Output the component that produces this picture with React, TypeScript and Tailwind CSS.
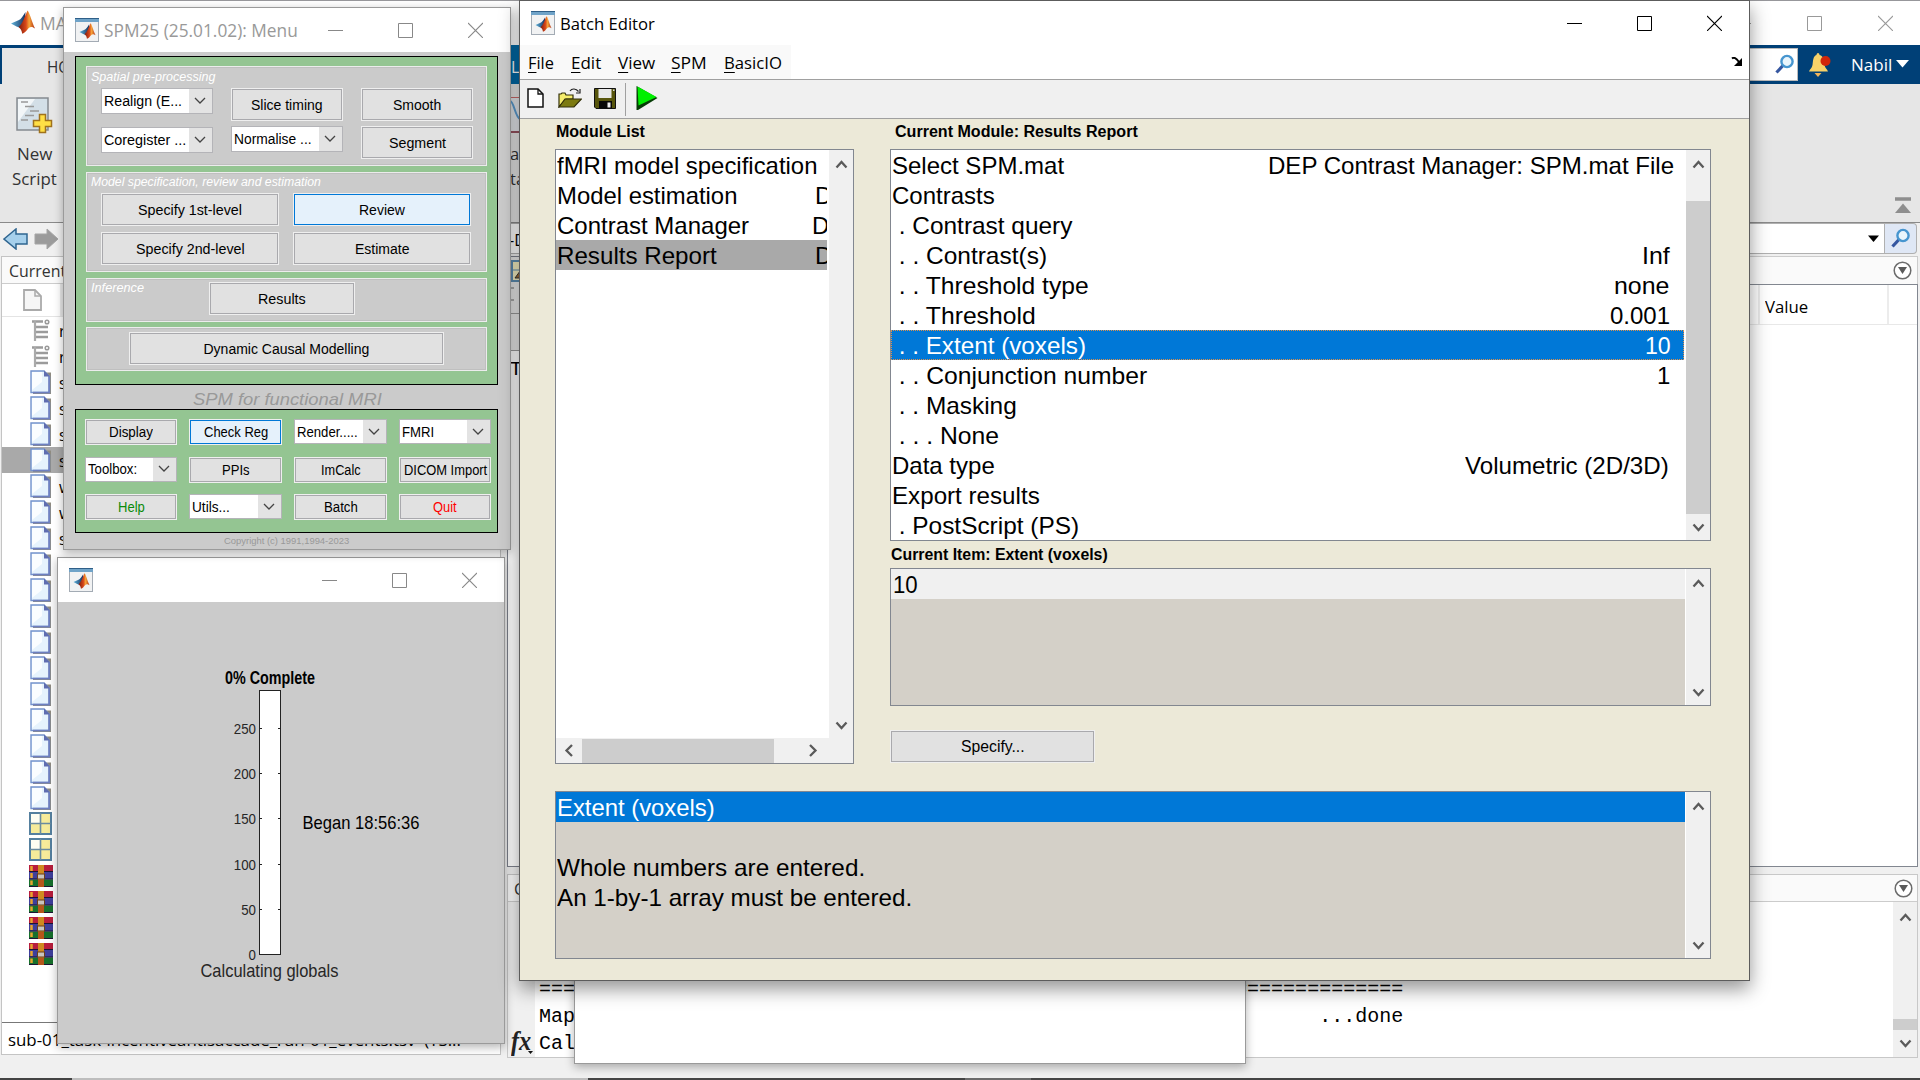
import { useLayoutEffect, useRef, useState } from "react";
import type { ReactNode } from "react";

const UI = "font-['Open_Sans','Noto_Sans',sans-serif]";
const ARIAL = "font-['Liberation_Sans',Arial,sans-serif]";
const MONO = "font-['Liberation_Mono','Courier_New',monospace]";

/** Text squeezed or stretched horizontally to a given width. */
function Fit({ w, className = "", children }: { w: number; className?: string; children: ReactNode }) {
  const ref = useRef<HTMLSpanElement>(null);
  const [scale, setScale] = useState(1);
  useLayoutEffect(() => {
    if (ref.current) setScale(w / ref.current.offsetWidth);
  }, [w]);
  return (
    <span className={`inline-block shrink-0 whitespace-pre text-left ${className}`} style={{ width: w }}>
      <span ref={ref} className="inline-block origin-left" style={{ transform: `scaleX(${scale})` }}>
        {children}
      </span>
    </span>
  );
}

function MatlabMark({ className = "" }: { className?: string }) {
  return (
    <svg viewBox="0 0 24 24" className={className}>
      <defs>
        <linearGradient id="mk-b" x1="0" y1="0" x2="1" y2="0">
          <stop offset="0" stopColor="#5fb4dc" />
          <stop offset="1" stopColor="#17305e" />
        </linearGradient>
        <linearGradient id="mk-o" x1="0" y1="0" x2="1" y2="0">
          <stop offset="0" stopColor="#7c1a0c" />
          <stop offset=".45" stopColor="#d8481a" />
          <stop offset=".65" stopColor="#f6a53a" />
          <stop offset="1" stopColor="#b02a10" />
        </linearGradient>
      </defs>
      <path d="M0 13.5 L7.5 10.2 C10 9.5 12 6 14.5 2 L14 11 L8.5 17.5 L5.5 16.5 Z" fill="url(#mk-b)" />
      <path d="M16.5 0.5 C18.5 2 20.5 11 24 18.5 C21.5 16.5 19.5 16.3 17.3 18.4 C15.5 20.5 13.5 23.3 11.2 23.7 C10.8 21 10 18.7 7.5 17 C11.5 14 14 6 16.5 0.5 Z" fill="url(#mk-o)" />
    </svg>
  );
}

function WinIcon() {
  return (
    <div className="-mt-px flex h-[24px] w-[24px] shrink-0 flex-col border border-[#a3abb4] bg-[#f1f2f3]">
      <div className="-mx-px -mt-px h-[4px] border-t border-[#2f5f88] bg-[#6fa3c8]" />
      <div className="flex flex-1 items-center justify-center">
        <MatlabMark className="h-[16px] w-[17px]" />
      </div>
    </div>
  );
}

function CaptionButtons({ color, gap }: { color: string; gap: string }) {
  return (
    <div className={`-mt-px flex items-center ${gap} ${color}`}>
      <svg width="15" height="16" viewBox="0 0 15 16"><path d="M0 8.5H15" stroke="currentColor" /></svg>
      <svg width="15" height="16" viewBox="0 0 15 16"><path d="M.5 1.5H14.5V15.5H.5Z" fill="none" stroke="currentColor" /></svg>
      <svg width="15" height="16" viewBox="0 0 15 16"><path d="M0 1L15 16M15 1L0 16" stroke="currentColor" strokeWidth="1.1" /></svg>
    </div>
  );
}

function Arrow({ dir }: { dir: "up" | "down" | "left" | "right" }) {
  const paths = {
    up: "M1.5 8.5L6.5 3L11.5 8.5",
    down: "M1.5 3.5L6.5 9L11.5 3.5",
    left: "M9 1L3.5 6.5L9 12",
    right: "M4 1L9.5 6.5L4 12",
  };
  return (
    <svg width="13" height="13" viewBox="0 0 13 13" className="block shrink-0">
      <path d={paths[dir]} fill="none" stroke="#5a5a5a" strokeWidth="2.3" />
    </svg>
  );
}

function VScroll({ thumb }: { thumb?: ReactNode }) {
  return (
    <div className="flex w-[25px] shrink-0 flex-col items-center justify-between border-l border-white bg-[#f0f0f0] pt-[9px] pb-[6px]">
      <Arrow dir="up" />
      {thumb}
      <Arrow dir="down" />
    </div>
  );
}

/* ---------- SPM menu ---------- */

function Btn({ size, w, active, color = "text-black", font = "text-[14px]", children }: { size: string; w?: number; active?: boolean; color?: string; font?: string; children: string }) {
  return (
    <div className={`shrink-0 border border-[#efefef] ${size}`}>
      <div className={`flex h-full items-center justify-center border pt-px ${active ? "border-[#0078d7] bg-[#e5f1fb]" : "border-[#a9a9ad] bg-[#e1e1e1]"} ${color} ${font}`}>
        {w ? <Fit w={w}>{children}</Fit> : children}
      </div>
    </div>
  );
}

function Combo({ size, w, children }: { size: string; w: number; children: string }) {
  return (
    <div className={`flex shrink-0 items-center border border-[#b4b4b8] bg-white text-[14px] text-black ${size}`}>
      <div className="flex flex-1 items-center overflow-hidden pl-[2px] pt-px"><Fit w={w}>{children}</Fit></div>
      <div className="flex h-full w-[23px] shrink-0 items-center justify-center bg-[#e3e3e3] pr-px">
        <svg width="12" height="8" viewBox="0 0 12 8"><path d="M1 1L6 6L11 1" fill="none" stroke="#444" strokeWidth="1.3" /></svg>
      </div>
    </div>
  );
}

const PANEL = "border border-[#ececec]";
const PANEL_IN = "h-full border border-[#bfbfbf] bg-[#cbcbcb]";

function SpmMenu() {
  return (
    <div className={`absolute left-[63px] top-[7px] flex h-[543px] w-[448px] flex-col border border-[#9a9a9a] bg-[#cbcbcb] shadow-[0_3px_9px_rgba(0,0,0,.3)] ${ARIAL}`}>
      <div className={`flex h-[44px] shrink-0 items-center bg-white pl-[11px] text-[18px] text-[#999] ${UI}`}>
        <WinIcon />
        <Fit w={194} className="ml-[5px]">SPM25 (25.01.02): Menu</Fit>
        <div className="ml-[30px]"><CaptionButtons color="text-[#888]" gap="gap-[55px]" /></div>
      </div>
      <div className="ml-[11px] mt-[4px] flex h-[329px] w-[423px] shrink-0 flex-col border border-black bg-[#94c592] pl-[10px] pt-[9px]">
        <div className={`h-[100px] w-[401px] ${PANEL}`}>
          <div className={`pl-[3px] ${PANEL_IN}`}>
            <div className="h-[20px] pt-px text-[12px] italic leading-[16px] text-white"><Fit w={124}>Spatial pre-processing</Fit></div>
            <div className="flex gap-[18px] pl-[10px]">
              <div className="flex flex-col gap-[13px]">
                <Combo size="h-[26px] w-[112px]" w={78}>Realign (E...</Combo>
                <Combo size="h-[26px] w-[112px]" w={82}>Coregister ...</Combo>
              </div>
              <div className="flex flex-col gap-[5px]">
                <Btn size="h-[33px] w-[112px]" w={72}>Slice timing</Btn>
                <Combo size="h-[26px] w-[112px]" w={78}>Normalise ...</Combo>
              </div>
              <div className="flex flex-col gap-[5px]">
                <Btn size="h-[33px] w-[112px]" w={48}>Smooth</Btn>
                <Btn size="h-[33px] w-[112px]" w={57}>Segment</Btn>
              </div>
            </div>
          </div>
        </div>
        <div className={`mt-[6px] h-[100px] w-[401px] ${PANEL}`}>
          <div className={`pl-[3px] ${PANEL_IN}`}>
            <div className="h-[19px] text-[12px] italic leading-[16px] text-white"><Fit w={230}>Model specification, review and estimation</Fit></div>
            <div className="grid grid-cols-[178px_178px] gap-x-[14px] gap-y-[6px] pl-[10px]">
              <Btn size="h-[33px] w-[178px]" w={104}>Specify 1st-level</Btn>
              <Btn size="h-[33px] w-[178px]" w={46} active>Review</Btn>
              <Btn size="h-[33px] w-[178px]" w={109}>Specify 2nd-level</Btn>
              <Btn size="h-[33px] w-[178px]" w={54}>Estimate</Btn>
            </div>
          </div>
        </div>
        <div className={`mt-[6px] h-[44px] w-[401px] ${PANEL}`}>
          <div className={`flex pl-[3px] pt-[2px] ${PANEL_IN}`}>
            <div className="w-[118px] text-[12px] italic leading-[13px] text-white"><Fit w={53}>Inference</Fit></div>
            <Btn size="h-[33px] w-[146px]" w={48}>Results</Btn>
          </div>
        </div>
        <div className={`mt-[5px] h-[44px] w-[401px] ${PANEL}`}>
          <div className={`flex pl-[38px] pt-[3px] ${PANEL_IN}`}>
            <Btn size="ml-[3px] h-[33px] w-[315px]" w={166}>Dynamic Causal Modelling</Btn>
          </div>
        </div>
      </div>
      <div className="flex h-[24px] shrink-0 items-center justify-center pt-[5px] text-[17px] italic text-[#999]">
        <Fit w={189}>SPM for functional MRI</Fit>
      </div>
      <div className="ml-[11px] grid h-[124px] w-[423px] shrink-0 grid-cols-[92px_93px_93px_92px] content-start gap-x-[12px] gap-y-[11.5px] border border-black bg-[#94c592] pl-[9px] pt-[9px]">
        <Btn size="h-[26px] w-[92px]" w={44}>Display</Btn>
        <Btn size="h-[26px] w-[93px]" w={64} active>Check Reg</Btn>
        <Combo size="h-[25px] w-[93px]" w={61}>Render.....</Combo>
        <Combo size="h-[25px] w-[92px]" w={32}>FMRI</Combo>
        <Combo size="h-[25px] w-[92px]" w={49}>Toolbox:</Combo>
        <Btn size="h-[26px] w-[93px]" w={28}>PPIs</Btn>
        <Btn size="h-[26px] w-[93px]" w={40}>ImCalc</Btn>
        <Btn size="h-[26px] w-[92px]" w={83}>DICOM Import</Btn>
        <Btn size="h-[26px] w-[92px]" w={27} color="text-[#0a8a0a]">Help</Btn>
        <Combo size="h-[25px] w-[93px]" w={38}>Utils...</Combo>
        <Btn size="h-[26px] w-[93px]" w={34}>Batch</Btn>
        <Btn size="h-[26px] w-[92px]" w={24} color="text-[#f00]">Quit</Btn>
      </div>
      <div className="flex justify-center pr-[2px] pt-px text-[9.5px] leading-[13px] text-[#999]">
        <Fit w={125}>Copyright (c) 1991,1994-2023</Fit>
      </div>
    </div>
  );
}

/* ---------- Progress window ---------- */

const TICKS = [
  { v: "250", y: 127 }, { v: "200", y: 172 }, { v: "150", y: 217 },
  { v: "100", y: 263 }, { v: "50", y: 308 }, { v: "0", y: 353 },
];

function Progress() {
  return (
    <div className={`absolute left-[57px] top-[557px] flex h-[487px] w-[448px] flex-col border border-[#9a9a9a] bg-[#cbcbcb] shadow-[0_3px_9px_rgba(0,0,0,.3)] ${ARIAL}`}>
      <div className="flex h-[44px] shrink-0 items-center bg-white pl-[11px]">
        <WinIcon />
        <div className="ml-[229px]"><CaptionButtons color="text-[#888]" gap="gap-[55px]" /></div>
      </div>
      <svg width="446" height="441" viewBox="0 0 446 441" className="block">
        <text x="167" y="82" fontSize="17.5" fontWeight="700" fill="#000" textLength="90" lengthAdjust="spacingAndGlyphs">0% Complete</text>
        <rect x="201.5" y="88.5" width="21" height="264" fill="#fff" stroke="#222" />
        {TICKS.map((t) => (
          <g key={t.v}>
            <path d={`M201 ${t.y - 0.5}H204M220 ${t.y - 0.5}H223`} stroke="#222" />
            <text x={198 - t.v.length * 7.4} y={t.y + 4.5} fontSize="15.5" fill="#262626" textLength={t.v.length * 7.4} lengthAdjust="spacingAndGlyphs">{t.v}</text>
          </g>
        ))}
        <text x="244.5" y="226.500" fontSize="18.5" fill="#000" textLength="117" lengthAdjust="spacingAndGlyphs">Began 18:56:36</text>
        <text x="142.5" y="374.500" fontSize="18.5" fill="#262626" textLength="138" lengthAdjust="spacingAndGlyphs">Calculating globals</text>
      </svg>
    </div>
  );
}

/* ---------- Batch editor ---------- */

const MENUS = [
  { k: "F", t: "ile", w: 26, gap: "ml-[8px]" },
  { k: "E", t: "dit", w: 30, gap: "ml-[17px]" },
  { k: "V", t: "iew", w: 37, gap: "ml-[17px]" },
  { k: "S", t: "PM", w: 36, gap: "ml-[16px]" },
  { k: "B", t: "asicIO", w: 58, gap: "ml-[17px]" },
];

const MODULES = [
  { n: "fMRI model specification", w: 260, d: "" },
  { n: "Model estimation", w: 180, d: "ml-[78px]" },
  { n: "Contrast Manager", w: 192, d: "ml-[63px]" },
  { n: "Results Report", w: 160, d: "ml-[98px]", sel: true },
];

const ITEMS = [
  { n: "Select SPM.mat", w: 172, v: "DEP Contrast Manager: SPM.mat File", vw: 406, r: "pr-[11px]" },
  { n: "Contrasts", w: 103 },
  { n: " . Contrast query", w: 180 },
  { n: " . . Contrast(s)", w: 155, v: "Inf", vw: 28, r: "pr-[15px]" },
  { n: " . . Threshold type", w: 197, v: "none", vw: 55, r: "pr-[16px]" },
  { n: " . . Threshold", w: 144, v: "0.001", vw: 60, r: "pr-[15px]" },
  { n: " . . Extent (voxels)", w: 194, v: "10", vw: 26, r: "pr-[13px]", sel: true },
  { n: " . . Conjunction number", w: 255, v: "1", vw: 13, r: "pr-[15px]" },
  { n: " . . Masking", w: 125 },
  { n: " . . . None", w: 107 },
  { n: "Data type", w: 103, v: "Volumetric (2D/3D)", vw: 204, r: "pr-[16px]" },
  { n: "Export results", w: 148 },
  { n: " . PostScript (PS)", w: 187 },
];

const BOX = "flex border border-[#828790]";

function BatchEditor() {
  return (
    <div className="absolute left-[519px] top-0 flex h-[981px] w-[1231px] flex-col border border-[#5c5c5c] bg-[#ece9d8] shadow-[0_8px_18px_rgba(0,0,0,.42)]">
      <div className={`flex h-[44px] shrink-0 items-center bg-white pl-[11px] text-[17px] text-black ${UI}`}>
        <WinIcon />
        <Fit w={95} className="ml-[5px] mt-px">Batch Editor</Fit>
        <div className="ml-auto mr-[27px]"><CaptionButtons color="text-black" gap="gap-[55px]" /></div>
      </div>
      <div className={`flex h-[35px] shrink-0 border-b border-[#a0a0a0] bg-white text-[17px] leading-[36px] text-black ${UI}`}>
        <div className="flex w-[271px] bg-[#f9f9f9]">
          {MENUS.map((m) => (
            <Fit key={m.k} w={m.w} className={m.gap}><span className="underline decoration-1 underline-offset-[3px]">{m.k}</span>{m.t}</Fit>
          ))}
        </div>
        <svg width="12" height="10" viewBox="0 0 12 10" className="ml-auto mr-[6px] mt-[12px]">
          <path d="M1 1.5C3 0 5 1 8 5" stroke="#000" strokeWidth="2" fill="none" /><path d="M11 1V9H3Z" fill="#000" />
        </svg>
      </div>
      <div className="flex h-[39px] shrink-0 items-start border-b border-[#a0a0a0] bg-[#f0f0f0] pl-[7px] pt-[5px]">
        <svg width="17" height="20" viewBox="0 0 17 20" className="mt-[3px]">
          <path d="M1 1H11L16 6V19H1Z" fill="#fff" stroke="#111" strokeWidth="1.5" /><path d="M11 1V6H16" fill="none" stroke="#111" strokeWidth="1.3" />
        </svg>
        <svg width="24" height="20" viewBox="0 0 24 20" className="ml-[14px] mt-[3px]">
          <path d="M1 6H3L4 5H7L8 7H15V11H8L1 19Z" fill="#f4ec6c" stroke="#33300a" strokeWidth="1.2" />
          <path d="M1 19L7 11H23.5L16 19Z" fill="#7c7a10" stroke="#33300a" strokeWidth="1.2" />
          <path d="M12 3C14 0 18 .5 20.5 3.5M22 1V5H18" fill="none" stroke="#222" strokeWidth="1.2" />
        </svg>
        <svg width="22" height="21" viewBox="0 0 22 21" className="ml-[12px] mt-[3px]">
          <path d="M.5 .5H21.5V20.5H2L.5 19Z" fill="#57550c" stroke="#111" />
          <path d="M4.500 1H17.500V10H4.500Z" fill="#e8e8e8" /><path d="M5 13H18V20.500H5Z" fill="#080808" /><path d="M13.500 14.500H16.500V19.500H13.500Z" fill="#eee" />
          <path d="M19 1.500H20.500V3H19Z" fill="#ddd" />
        </svg>
        <div className="ml-[9px] mt-[-2px] h-[33px] w-px bg-[#a0a0a0]" />
        <svg width="24" height="26" viewBox="0 0 24 26" className="ml-[9px]">
          <path d="M1.500 1L22.500 13L3 25H1.500Z" fill="#063c06" /><path d="M2.500 1.500L21.500 12L3.500 20.500Z" fill="#00f000" />
        </svg>
      </div>
      <div className={`flex flex-1 flex-col pl-[35px] text-black ${ARIAL}`}>
        <div className="flex h-[30px] shrink-0 items-center text-[16px] font-bold leading-[20px]">
          <Fit w={89} className="ml-px -mt-[5px]">Module List</Fit>
          <Fit w={243} className="ml-[250px] -mt-[5px]">Current Module: Results Report</Fit>
        </div>
        <div className="flex h-[615px] gap-[36px]">
          <div className={`h-[615px] w-[299px] shrink-0 flex-col bg-white text-[24px] leading-[30px] ${BOX}`}>
            <div className="flex flex-1">
              <div className="w-[272px]">
                {MODULES.map((m) => (
                  <div key={m.n} className={`flex h-[30px] w-[271px] overflow-hidden pl-px pt-px ${m.sel ? "bg-[#a9a9a9]" : ""}`}>
                    <Fit w={m.w}>{m.n}</Fit>
                    {m.d ? <span className={m.d}>D</span> : null}
                  </div>
                ))}
              </div>
              <VScroll />
            </div>
            <div className="flex h-[25px] shrink-0 items-center bg-[#f0f0f0]">
              <div className="flex w-[26px] justify-center"><Arrow dir="left" /></div>
              <div className="h-[24px] w-[192px] bg-[#cdcdcd]" />
              <div className="ml-[26px] flex w-[25px] justify-center"><Arrow dir="right" /></div>
            </div>
          </div>
          <div className="flex flex-col">
            <div className={`h-[392px] w-[821px] shrink-0 bg-white text-[24px] leading-[30px] ${BOX}`}>
              <div className="flex-1 overflow-hidden">
                {ITEMS.map((i) => (
                  <div key={i.n} className={`flex h-[30px] justify-between pl-px pt-px ${i.r ?? ""} ${i.sel ? "mr-px bg-[#0078d7] text-white outline-1 -outline-offset-1 outline-dotted outline-[#e0904a]" : ""}`}>
                    <Fit w={i.w}>{i.n}</Fit>
                    {i.v ? <Fit w={i.vw ?? 0}>{i.v}</Fit> : null}
                  </div>
                ))}
              </div>
              <VScroll thumb={<div className="mb-[7px] mt-auto h-[313px] w-[24px] shrink-0 bg-[#cdcdcd]" />} />
            </div>
            <div className="flex h-[27px] shrink-0 items-center text-[16px] font-bold leading-[20px]">
              <Fit w={217} className="ml-px">Current Item: Extent (voxels)</Fit>
            </div>
            <div className={`h-[138px] w-[821px] shrink-0 bg-[#d4d0c8] text-[24px] leading-[30px] ${BOX}`}>
              <div className="flex-1"><div className="h-[30px] bg-[#f0f0f0] pl-[2px] pt-px"><Fit w={25}>10</Fit></div></div>
              <VScroll />
            </div>
            <div className="pt-[24px]"><Btn size="h-[33px] w-[205px]" w={64} font="text-[16px]">Specify...</Btn></div>
          </div>
        </div>
        <div className={`mt-[27px] h-[168px] w-[1156px] shrink-0 bg-[#d4d0c8] text-[24px] leading-[30px] ${BOX}`}>
          <div className="flex-1">
            <div className="h-[30px] bg-[#0078d7] pl-px pt-px text-white"><Fit w={158}>Extent (voxels)</Fit></div>
            <div className="h-[30px]" />
            <div className="h-[30px] pl-px pt-px"><Fit w={308}>Whole numbers are entered.</Fit></div>
            <div className="h-[30px] pl-px pt-px"><Fit w={355}>An 1-by-1 array must be entered.</Fit></div>
          </div>
          <VScroll />
        </div>
      </div>
    </div>
  );
}

/* ---------- MATLAB desktop ---------- */

function Loupe() {
  return (
    <svg width="20" height="20" viewBox="0 0 20 20" className="-mt-[2px] shrink-0">
      <path d="M1.500 18.500L8 11.500" stroke="#3556a0" strokeWidth="3.200" />
      <circle cx="12" cy="7.500" r="5.600" fill="#e9f5fc" stroke="#4695cf" strokeWidth="2.400" />
    </svg>
  );
}

function CircleMenu() {
  return (
    <svg width="19" height="19" viewBox="0 0 19 19" className="shrink-0">
      <circle cx="9.500" cy="9.500" r="8.300" fill="#fff" stroke="#6c6c6c" strokeWidth="1.500" /><path d="M5 6H14L9.500 13Z" fill="#5a5a5a" />
    </svg>
  );
}

function DocIcon() {
  return (
    <svg width="22" height="24" viewBox="0 0 22 24" className="-ml-px">
      <path d="M3 2.500H21V24H3Z" fill="#8f8b80" />
      <path d="M1 1H14L19.500 6.500V22.500H1Z" fill="#e6f3fd" stroke="#7392cc" strokeWidth="1.400" />
      <path d="M2 2H12V12L2 20Z" fill="#fff" opacity=".8" /><path d="M14 .5V6.500H20Z" fill="#5f6db0" /><path d="M19 6V22.500H3" stroke="#6e7fc0" strokeWidth="1.600" fill="none" />
    </svg>
  );
}

function TreeIcon() {
  return (
    <svg width="18" height="22" viewBox="0 0 18 22">
      <path d="M0 2.500H11M3 8H16M3 13H16M3 18H16" stroke="#9b9b9b" strokeWidth="2.400" /><path d="M3 2V22" stroke="#aaa" strokeWidth="2.200" /><circle cx="15" cy="3" r="1.800" fill="none" stroke="#999" strokeWidth="1.500" />
    </svg>
  );
}

function GridIcon() {
  return (
    <svg width="23" height="23" viewBox="0 0 23 23" className="-ml-[2px] -mt-[2px]">
      <rect x="1" y="1" width="21" height="21" fill="#f6eb9a" stroke="#55809f" strokeWidth="2" /><rect x="2" y="2" width="9" height="9" fill="#fffef2" /><path d="M11.500 1V22M1 11.500H22" stroke="#6a8ca0" strokeWidth="1.600" />
    </svg>
  );
}

function RarIcon() {
  return (
    <svg width="24" height="22" viewBox="0 0 24 22">
      <rect width="24" height="7" fill="#b81d3c" /><rect y="7" width="24" height="7.500" fill="#3f3f9c" /><rect y="14.500" width="24" height="7.500" fill="#17702c" />
      <path d="M0 6.500H24M0 14H24M0 21.500H24" stroke="#1d1433" strokeWidth="1.200" />
      <rect x="9" width="6" height="22" fill="#d08a20" /><rect x="8.500" y="9" width="7" height="5" fill="#c9c4bd" stroke="#6b3d18" /><path d="M2.500 1V6M2.500 8V13M2.500 15.500V20" stroke="#e8a52c" strokeWidth="2.500" />
      <path d="M9 15H15V22H9Z" fill="#b5561a" />
    </svg>
  );
}

const FILES: { kind: "tree" | "doc" | "grid" | "rar"; c?: string; sel?: boolean }[] = [
  { kind: "tree", c: "r" }, { kind: "tree", c: "r" },
  { kind: "doc", c: "s" }, { kind: "doc", c: "s" }, { kind: "doc", c: "s" }, { kind: "doc", c: "s", sel: true },
  { kind: "doc", c: "w" }, { kind: "doc", c: "w" }, { kind: "doc", c: "s" },
  { kind: "doc" }, { kind: "doc" }, { kind: "doc" }, { kind: "doc" }, { kind: "doc" }, { kind: "doc" }, { kind: "doc" }, { kind: "doc" }, { kind: "doc" }, { kind: "doc" },
  { kind: "grid" }, { kind: "grid" },
  { kind: "rar" }, { kind: "rar" }, { kind: "rar" }, { kind: "rar" },
];

function Desktop() {
  return (
    <div className={`flex h-[1080px] w-[1920px] flex-col bg-[#f0f0f0] text-[#333] ${UI}`}>
      <div className="flex h-[45px] shrink-0 items-center border-t border-[#97979b] bg-white pl-[11px] text-[18px] text-[#999]">
        <MatlabMark className="-mt-[2px] h-[24px] w-[24px]" />
        <span className="ml-[5px] text-[17.500px]">MA</span>
        <div className="ml-auto mr-[27px]"><CaptionButtons color="text-[#999]" gap="gap-[56px]" /></div>
      </div>
      <div className="flex h-[39px] shrink-0 items-center bg-[#004077]">
        <div className="ml-[2px] mt-[3px] flex h-[36px] w-[200px] items-center bg-[#e6e6e6] pl-[45px] pt-px text-[16px]"><Fit w={23}>HO</Fit></div>
        <div className="ml-[300px] flex h-full w-[200px] items-center bg-[#0069a6] pl-[9px] pt-[5px] text-[16px] text-white">L</div>
        <div className="ml-auto flex h-[33px] w-[300px] items-center justify-end border border-[#bbb] bg-white pr-[2px]"><Loupe /></div>
        <svg width="22" height="24" viewBox="0 0 22 24" className="ml-[11px]">
          <path d="M9 0C10 0 10.500 1 10.500 2C15 3 15 8 15.500 12C16 15 18 16 19 18.500H0C1 16 3 15 3.500 12C4 8 4 3 7.500 2C7.500 1 8 0 9 0Z" fill="#f7d269" /><path d="M5.500 20H12.500L9 24Z" fill="#f0b55c" /><circle cx="16.500" cy="8" r="5" fill="#d1260a" />
        </svg>
        <Fit w={41} className="ml-[20px] mt-px text-[17px] text-white">Nabil</Fit>
        <svg width="13" height="8" viewBox="0 0 13 8" className="ml-[4px] mr-[11px] -mt-[2px]"><path d="M0 0H13L6.500 7.500Z" fill="#fff" /></svg>
      </div>
      <div className="flex h-[139px] shrink-0 border-b border-[#8a8a8a] bg-[#e6e6e6]">
        <div className="flex w-[70px] flex-col items-center pt-[12px] text-[16.500px] leading-[25px]">
          <svg width="38" height="38" viewBox="0 0 38 38" className="-ml-[2px]">
            <path d="M2 2H33V34H2Z" fill="#d3dfe7" stroke="#858a90" strokeWidth="1.500" /><path d="M3 3H20L3 26Z" fill="#fff" opacity=".7" />
            <path d="M6 6H13M10 10.500H19M15 15H24M10 19.500H19M6 24H13" stroke="#999" strokeWidth="1.600" />
            <path d="M24.500 18.500H30.500V24.500H36.500V30.500H30.500V36.500H24.500V30.500H18.500V24.500H24.500Z" fill="#ffdf45" stroke="#a0721c" strokeWidth="1.500" />
          </svg>
          <div className="-ml-[2px] mt-[7px]"><Fit w={35}>New</Fit></div>
          <div className="-ml-px"><Fit w={45}>Script</Fit></div>
        </div>
        <div className="ml-[440px] flex w-[50px] flex-col pt-[13px] text-[16.500px] leading-[25px]">
          <svg width="36" height="36" viewBox="0 0 36 36"><path d="M0 0H36V36H0Z" fill="#e3e6ea" /><path d="M0 .5H36" stroke="#c96a6a" /><path d="M0 35H36" stroke="#7c2030" strokeWidth="1.500" /><path d="M0 4C4 4 5 20 10 22" stroke="#5b9bd0" strokeWidth="2" fill="none" /></svg>
          <div className="mt-[8px]">a</div>
          <div>ta</div>
        </div>
        <svg width="16" height="17" viewBox="0 0 16 17" className="ml-auto mr-[9px] mt-[113px]"><path d="M0 2H16" stroke="#8e8e8e" strokeWidth="3.500" /><path d="M8 6.500L16 16H0Z" fill="#8e8e8e" /></svg>
      </div>
      <div className="flex h-[33px] shrink-0 items-center pb-[2px] pl-[3px]">
        <svg width="25" height="22" viewBox="0 0 25 22"><path d="M1 11L13 1V6H24V16H13V21Z" fill="#a6d0ec" stroke="#2f6590" strokeWidth="1.500" /></svg>
        <svg width="25" height="22" viewBox="0 0 25 22" className="ml-[6px]"><path d="M24 11L13 1V6H1V16H13V21Z" fill="#9b9b9b" stroke="#a5a5a5" /></svg>
        <div className="ml-[40px] flex h-[31px] flex-1 items-center border border-[#b0b0b0] bg-white pl-[409px] text-[16px] text-black">
          <span className="mt-[2px]">-D</span>
          <svg width="11" height="7" viewBox="0 0 11 7" className="ml-auto mr-[5px]"><path d="M0 .5H11L5.500 7Z" fill="#000" /></svg>
        </div>
        <div className="mr-[3px] flex h-[31px] w-[32px] items-center justify-center rounded-r border border-l-0 border-[#b0b0b0] bg-[#dfe7f5]"><Loupe /></div>
      </div>
      <div className="flex h-[799px] shrink-0">
        <div className="ml-px flex w-[500px] flex-col border border-[#c4c4c4] bg-white">
          <div className="flex h-[27px] shrink-0 items-center border-b border-[#ccc] bg-[#fafafa] pl-[7px] pt-[2px] text-[17px]">
            <Fit w={57}>Current</Fit>
          </div>
          <div className="flex h-[33px] shrink-0 items-center border-b border-[#e4e4e4] pl-[21px]">
            <svg width="19" height="22" viewBox="0 0 19 22"><path d="M1 1H12L18 7V21H1Z" fill="#f6f6f6" stroke="#aaa" strokeWidth="1.800" /><path d="M12 1V7H18" fill="none" stroke="#aaa" strokeWidth="1.500" /></svg>
            <div className="ml-[18px] h-full w-[3px] bg-[#e8e8e8]" />
          </div>
          {FILES.map((f, i) => (
            <div key={i} className={`flex h-[26px] shrink-0 items-center text-[16px] text-black ${f.sel ? "bg-[#a9a9a9]" : ""}`}>
              <div className="flex w-[57px] shrink-0 justify-center pl-[21px]">
                {f.kind === "tree" ? <TreeIcon /> : f.kind === "doc" ? <DocIcon /> : f.kind === "grid" ? <GridIcon /> : <RarIcon />}
              </div>
              <span className="mt-[2px]">{f.c}</span>
            </div>
          ))}
          <div className="mt-auto flex h-[32px] shrink-0 items-center border-t border-[#777] bg-white pl-[6px] pt-[3px] text-[16px] text-black">
            <Fit w={453}>sub-01_task-incentiveantisaccade_run-01_events.tsv  (TS...</Fit>
          </div>
        </div>
        <div className="ml-[6px] flex flex-1 flex-col">
          <div className="flex h-[611px] shrink-0">
            <div className="flex w-[900px] flex-col border border-[#7d818c] bg-white">
              <div className="h-[94px] border-b border-[#9a9a9a] bg-[#e9e9e9] pl-[3px] pt-[3px]">
                <svg width="22" height="22" viewBox="0 0 22 22"><path d="M1 1H21V21H1Z" fill="#f3eec0" stroke="#5d8cb0" strokeWidth="2" /><path d="M2 10H20" stroke="#5d8cb0" /><path d="M4 18L12 7L17 9L8 18Z" fill="#9a6a35" stroke="#333" /></svg>
                <div className="mt-[5px] h-[14px] w-[3px] border-y-2 border-[#aaa]" />
                <div className="mt-[12px] h-px w-[200px] bg-[#9a9a9a]" />
              </div>
              <div className={`pl-[2px] pt-[4px] text-[20px] text-black ${MONO}`}>T</div>
            </div>
            <div className="mr-[2px] flex flex-1 flex-col border-t border-[#ccc]">
              <div className="flex h-[27px] shrink-0 items-center justify-end border-r border-[#ccc] bg-[#fafafa] pr-[5px]"><CircleMenu /></div>
              <div className="flex-1 border border-[#828790] bg-white">
                <div className="flex h-[40px] items-center justify-end border-b border-[#e8e8e8] text-[16px] text-black">
                  <div className="flex h-full w-[131px] items-center border-x-2 border-[#ececec] pl-[5px] pt-[4px]"><Fit w={43}>Value</Fit></div>
                  <div className="w-[28px]" />
                </div>
              </div>
            </div>
          </div>
          <div className="mr-[2px] mt-[7px] flex flex-1 flex-col border border-[#c8c8c8] bg-white">
            <div className="flex h-[27px] shrink-0 items-center justify-between border-b border-[#ccc] bg-[#fafafa] pl-[6px] pr-[4px] text-[16px]"><span className="mt-[2px]">C</span><CircleMenu /></div>
            <div className="flex flex-1">
              <div className="flex w-[27px] items-end bg-[#f0f0f0] pl-[3px] font-['Liberation_Serif',serif] text-[28px] font-bold italic leading-[32px] text-[#222]">
                <Fit w={20}>fx</Fit>
                <svg width="5" height="3" viewBox="0 0 5 3" className="-ml-[3px] mb-[3px]"><path d="M0 0H5L2.500 3Z" fill="#111" /></svg>
              </div>
              <div className={`flex-1 overflow-hidden whitespace-pre pl-[4px] pt-[74px] text-[20px] leading-[27px] text-black ${MONO}`}>
                <div>{"=".repeat(72)}</div>
                <div>{"Map" + " ".repeat(62) + "...done"}</div>
                <div>Cal</div>
              </div>
              <div className="flex w-[24px] flex-col items-center bg-[#f0f0f0] pb-[7px] pt-[10px]">
                <Arrow dir="up" />
                <div className="mb-[7px] mt-auto h-[11px] w-full bg-[#cdcdcd]" />
                <Arrow dir="down" />
              </div>
            </div>
          </div>
        </div>
      </div>
      <div className="mt-auto flex h-[2px] shrink-0 bg-[#444]">
        <div className="w-[72px] bg-[#444]" /><div className="w-[516px] bg-[#bdbdbd]" /><div className="w-[377px]" /><div className="w-[66px] bg-[#6b6b6b]" />
      </div>
    </div>
  );
}

export default function App() {
  return (
    <div className="relative h-[1080px] w-[1920px] overflow-hidden">
      <Desktop />
      <div className="absolute left-[574px] top-[700px] h-[364px] w-[672px] border border-[#9a9a9a] bg-white shadow-[0_3px_9px_rgba(0,0,0,.3)]" />
      <Progress />
      <SpmMenu />
      <BatchEditor />
    </div>
  );
}
